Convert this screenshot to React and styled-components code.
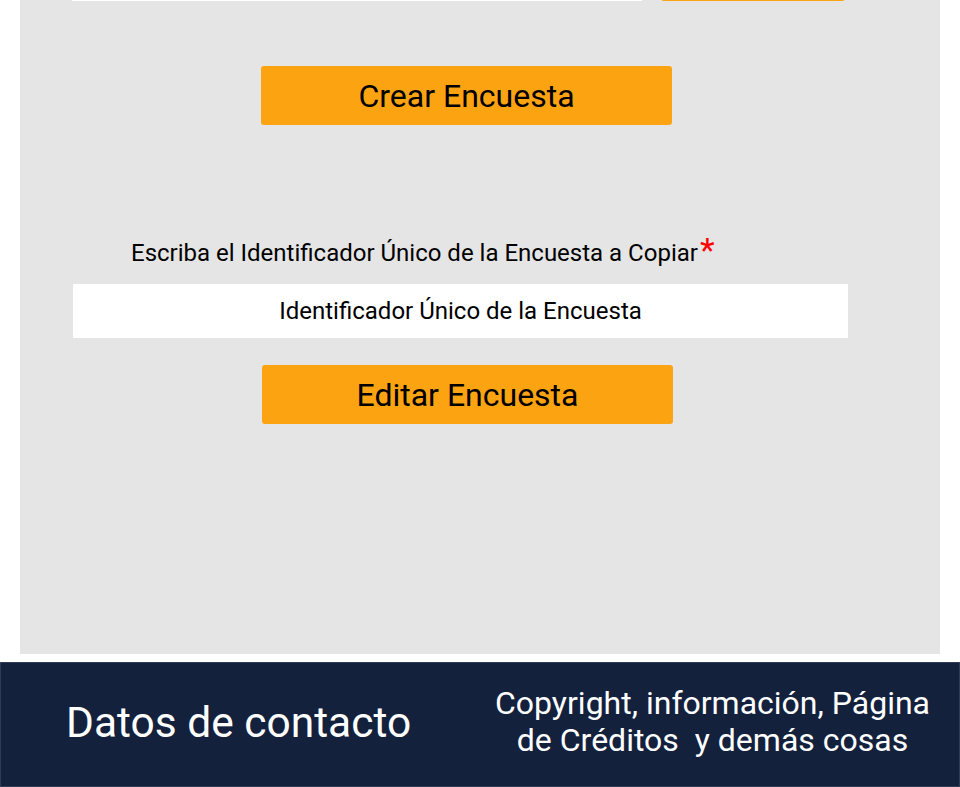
import styled, { createGlobalStyle } from "styled-components";

export default function App(){

    return (
        <>
        <GlobalStyle />
        <Page>
            <Panel>
                <TopRow>
                    <TopInput />
                    <TopButton />
                </TopRow>
                <Button top={65} left={241}>Crear Encuesta</Button>
                <Label>
                    Escriba el Identificador Único de la Encuesta a Copiar<Required>*</Required>
                </Label>
                <IdInput placeholder='Identificador Único de la Encuesta' />
                <Button top={27} left={242}>Editar Encuesta</Button>
            </Panel>
        </Page>
        <Footer>
            <Contact>Datos de contacto</Contact>
            <Credits>
                Copyright, información, Página<br />
                de Créditos&nbsp; y demás cosas
            </Credits>
        </Footer>
        </>
    );

}

const GlobalStyle = createGlobalStyle `
    body {
        margin: 0;
        background-color: #FFFFFF;
        font-family: Roboto, "Liberation Sans", sans-serif;
        overflow: hidden;
    }
`

const Page = styled.div `
    padding: 0px 20px;
`

const Panel = styled.div `
    height: 693px;
    margin-top: -39px;
    background-color: #E5E5E5;
    display: flex;
    flex-direction: column;
    align-items: flex-start;
`

const TopRow = styled.div `
    display: flex;
    gap: 19px;
    height: 40px;
    padding-left: 52px;
`

const TopInput = styled.div `
    width: 570px;
    height: 40px;
    background-color: #FFFFFF;
`

const TopButton = styled.div `
    width: 184px;
    height: 40px;
    background-color: #FCA311;
    border-radius: 3px;
`

const Button = styled.button `
    margin-top: ${props => props.top}px;
    margin-left: ${props => props.left}px;
    width: 411px;
    height: 59px;
    border: none;
    border-radius: 3px;
    background-color: #FCA311;
    color: #000000;
    font-family: Roboto, "Liberation Sans", sans-serif;
    font-size: 32px;
    padding: 0px;
    cursor: pointer;
`

const Label = styled.div `
    margin: 114px 0px 0px 111px;
    height: 28px;
    font-size: 24px;
    line-height: 28px;
    color: #000000;
    display: flex;
    align-items: flex-start;
`

const Required = styled.span `
    color: #FF0000;
    font-size: 34px;
    line-height: 28px;
    margin-left: 2px;
    margin-top: -3px;
`

const IdInput = styled.input `
    margin: 17px 0px 0px 53px;
    width: 775px;
    height: 54px;
    box-sizing: border-box;
    border: none;
    outline: none;
    background-color: #FFFFFF;
    font-family: Roboto, "Liberation Sans", sans-serif;
    font-size: 24px;
    text-align: center;

    &::placeholder {
        color: #000000;
        opacity: 1;
    }
`

const Footer = styled.footer `
    margin-top: 8px;
    height: 125px;
    box-sizing: border-box;
    background-color: #14213D;
    border: 1px solid #2F3C55;
    display: flex;
    align-items: center;
    justify-content: space-between;
    padding: 0px 29px 0px 65px;
    color: #FFFFFF;
`

const Contact = styled.div `
    font-size: 42.5px;
    margin-bottom: 4px;
`

const Credits = styled.div `
    font-size: 32px;
    line-height: 37px;
    text-align: center;
    margin-bottom: 6px;
`
